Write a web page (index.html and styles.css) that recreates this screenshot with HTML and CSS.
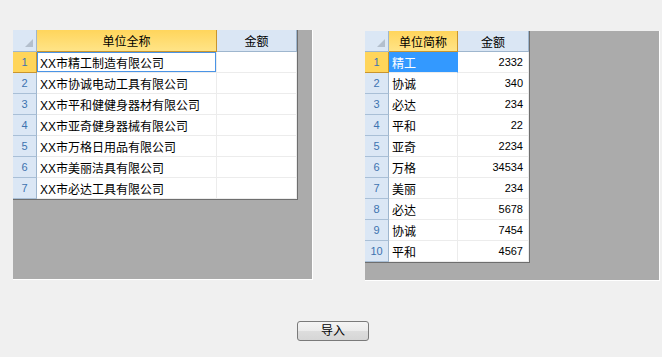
FILE: index.html
```html
<!DOCTYPE html>
<html>
<head>
<meta charset="utf-8">
<link rel="stylesheet" href="styles.css">
</head>
<body>
<div class="page">
  <div class="panels">
    <div class="panel panel-left">
      <div class="grid grid-left">
        <div class="cell corner"><svg width="8" height="8" viewBox="0 0 8 8"><polygon points="8,0 8,8 0,8" fill="#b3bfcd"/></svg></div>
        <div class="cell colhead active">单位全称</div>
        <div class="cell colhead">金额</div>

        <div class="cell rowhead active">1</div><div class="cell data current">XX市精工制造有限公司</div><div class="cell data"></div>
        <div class="cell rowhead">2</div><div class="cell data">XX市协诚电动工具有限公司</div><div class="cell data"></div>
        <div class="cell rowhead">3</div><div class="cell data">XX市平和健健身器材有限公司</div><div class="cell data"></div>
        <div class="cell rowhead">4</div><div class="cell data">XX市亚奇健身器械有限公司</div><div class="cell data"></div>
        <div class="cell rowhead">5</div><div class="cell data">XX市万格日用品有限公司</div><div class="cell data"></div>
        <div class="cell rowhead">6</div><div class="cell data">XX市美丽洁具有限公司</div><div class="cell data"></div>
        <div class="cell rowhead">7</div><div class="cell data">XX市必达工具有限公司</div><div class="cell data"></div>
      </div>
    </div>
    <div class="panel panel-right">
      <div class="grid grid-right">
        <div class="cell corner"><svg width="8" height="8" viewBox="0 0 8 8"><polygon points="8,0 8,8 0,8" fill="#b3bfcd"/></svg></div>
        <div class="cell colhead active">单位简称</div>
        <div class="cell colhead">金额</div>

        <div class="cell rowhead active">1</div><div class="cell data selected">精工</div><div class="cell data num">2332</div>
        <div class="cell rowhead">2</div><div class="cell data">协诚</div><div class="cell data num">340</div>
        <div class="cell rowhead">3</div><div class="cell data">必达</div><div class="cell data num">234</div>
        <div class="cell rowhead">4</div><div class="cell data">平和</div><div class="cell data num">22</div>
        <div class="cell rowhead">5</div><div class="cell data">亚奇</div><div class="cell data num">2234</div>
        <div class="cell rowhead">6</div><div class="cell data">万格</div><div class="cell data num">34534</div>
        <div class="cell rowhead">7</div><div class="cell data">美丽</div><div class="cell data num">234</div>
        <div class="cell rowhead">8</div><div class="cell data">必达</div><div class="cell data num">5678</div>
        <div class="cell rowhead">9</div><div class="cell data">协诚</div><div class="cell data num">7454</div>
        <div class="cell rowhead">10</div><div class="cell data">平和</div><div class="cell data num">4567</div>
      </div>
    </div>
  </div>
  <div class="actions">
    <button class="btn">导入</button>
  </div>
</div>
</body>
</html>
```

FILE: styles.css
```css
html, body {
  margin: 0;
  padding: 0;
}
body {
  background: #f0f0f0;
  font-family: "Liberation Sans", "Noto Sans CJK SC", sans-serif;
  font-size: 12px;
  color: #000;
  width: 662px;
  height: 357px;
  overflow: hidden;
}
.page {
  padding-top: 30px;
}
.panels {
  display: flex;
  align-items: flex-start;
}
.panel {
  background: #ababab;
  box-sizing: border-box;
  border-right: 1px solid #ffffff;
  border-bottom: 1px solid #ffffff;
}
.panel-left {
  margin-left: 13px;
  width: 300px;
  height: 250px;
}
.panel-right {
  margin-left: 52px;
  margin-top: 1px;
  width: 295px;
  height: 250px;
}
.grid {
  display: grid;
  background: #fff;
  border-right: 1px solid #6e6e6e;
  border-bottom: 1px solid #6e6e6e;
  width: max-content;
}
.grid-left {
  grid-template-columns: 24px 180px 80px;
  grid-template-rows: 22px;
  grid-auto-rows: 21px;
}
.grid-right {
  grid-template-columns: 24px 69px 71px;
  grid-template-rows: 21px;
  grid-auto-rows: 21px;
}
.cell {
  box-sizing: border-box;
  border-right: 1px solid #ececec;
  border-bottom: 1px solid #ececec;
  display: flex;
  align-items: center;
  white-space: nowrap;
  overflow: hidden;
}
.corner {
  background: #dbe7f5;
  border-right: 1px solid #9eb6ce;
  border-bottom: 1px solid #9eb6ce;
  justify-content: flex-end;
  align-items: flex-end;
  padding: 0 3px 4px 0;
}
.corner svg {
  display: block;
}
.colhead {
  background: #dae6f4;
  border-right: 1px solid #9eb6ce;
  border-bottom: 1px solid #9eb6ce;
  justify-content: center;
  font-size: 12px;
}
.colhead.active {
  background: linear-gradient(#ffd55c, #ffe487);
  border-right: 1px solid #c9952e;
  border-bottom: 1px solid #c9952e;
}
.rowhead {
  background: #dbe7f5;
  border-right: 1px solid #9eb6ce;
  border-bottom: 1px solid #a9bfd6;
  justify-content: center;
  color: #3d73b0;
  font-size: 11px;
}
.rowhead.active {
  background: #ffd55a;
  border-right: 1px solid #c9952e;
  border-bottom: 1px solid #c9952e;
}
.data {
  padding-left: 3px;
}
.current {
  box-shadow: inset 0 0 0 1px #4a94e6;
}
.selected {
  background: #3399ff;
  color: #ffffff;
  border-right-color: #3399ff;
}
.num {
  justify-content: flex-end;
  padding-right: 5px;
  font-size: 11px;
}
.actions {
  display: flex;
  margin-top: 40px;
  padding-left: 297px;
}
.btn {
  box-sizing: border-box;
  width: 72px;
  height: 20px;
  margin: 0;
  padding: 0;
  border: 1px solid #7a7a7a;
  border-radius: 3px;
  background: linear-gradient(#f4f4f4 0%, #ebebeb 50%, #dddddd 51%, #d6d6d6 100%);
  font-family: "Liberation Sans", "Noto Sans CJK SC", sans-serif;
  font-size: 12px;
  color: #000;
  line-height: 18px;
}
```
